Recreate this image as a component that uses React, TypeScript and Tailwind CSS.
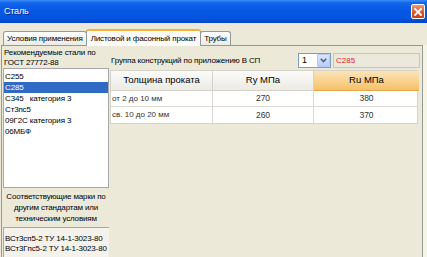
import React from "react";

const font = { fontFamily: '"Liberation Sans", Arial, sans-serif' };

function TitleBar() {
  return (
    <div className="h-[23px] flex items-center justify-between pl-[4px] pr-[2px] bg-[linear-gradient(to_bottom,#3d8ef8_0%,#1466ea_12%,#0657e3_45%,#0454df_80%,#0344c4_100%)]">
      <span className="text-white text-[9px] tracking-[-0.2px] leading-none [text-shadow:1px_1px_0_#0a2a8a]">Сталь</span>
      <div className="w-[14px] h-[15px] rounded-[2px] border border-white bg-[linear-gradient(to_bottom,#ec9a78,#d9532c_60%,#c2411c)] flex items-center justify-center">
        <svg width="8" height="8" viewBox="0 0 8 8">
          <path d="M1 1 L7 7 M7 1 L1 7" stroke="white" strokeWidth="1.8" strokeLinecap="square" />
        </svg>
      </div>
    </div>
  );
}

function Tab({ label, selected }: { label: string; selected?: boolean }) {
  if (selected) {
    return (
      <div className="relative z-10 h-[17px] -mb-[1px] -mx-[1px] px-[4px] flex items-center bg-[#fbfbf8] border border-b-0 border-[#919b9c] rounded-t-[3px] border-t-2 border-t-[#f3b23c] text-[8px] tracking-[-0.15px] text-black leading-none">
        {label}
      </div>
    );
  }
  return (
    <div className="h-[14px] px-[3px] flex items-center bg-[linear-gradient(to_bottom,#ffffff,#ecebe6)] border border-b-0 border-[#919b9c] rounded-t-[3px] text-[8px] tracking-[-0.15px] text-black leading-none">
      {label}
    </div>
  );
}

const steels = ["С255", "С285", "С345   категория 3", "Ст3пс5", "09Г2С категория 3", "06МБФ"];

function LeftColumn() {
  return (
    <div className="w-[107px] flex flex-col pl-[1px] text-[8px] tracking-[-0.15px] whitespace-nowrap">
      <div className="pt-[2px] pl-[1px] leading-[10px] text-black">
        <div>Рекомендуемые стали по</div>
        <div>ГОСТ 27772-88</div>
      </div>
      <div className="h-[120px] bg-white border border-[#a7a6aa] pt-[2px] leading-[11px] text-black">
        {steels.map((s, i) => (
          <div
            key={s}
            className={i === 1 ? "bg-[#316ac5] text-white pl-[1px] whitespace-pre" : "pl-[1px] whitespace-pre"}
          >
            {s}
          </div>
        ))}
      </div>
      <div className="mt-[3px] text-center leading-[11px] text-black">
        <div>Соответствующие марки по</div>
        <div>другим стандартам или</div>
        <div>техническим условиям</div>
      </div>
      <div className="mt-[3px] flex-1 bg-[#f4f2ea] border-t border-l border-[#a7a6aa] pt-[6px] pl-[1px] leading-[10px] text-black">
        <div>ВСт3сп5-2 ТУ 14-1-3023-80</div>
        <div>ВСт3Гпс5-2 ТУ 14-1-3023-80</div>
      </div>
    </div>
  );
}

function RightColumn() {
  return (
    <div className="flex-1 flex flex-col pl-[1px]">
      <div className="mt-[7px] h-[15px] flex items-center">
        <span className="pl-[1px] w-[188px] text-[8px] tracking-[-0.15px] text-black leading-none whitespace-nowrap">Группа конструкций по приложению В СП</span>
        <div className="w-[33px] h-[15px] bg-white border border-[#7f9db9] flex items-center justify-between">
          <span className="pl-[3px] text-[9px] leading-none text-black">1</span>
          <div className="w-[13px] h-[13px] bg-[linear-gradient(to_bottom,#dbe6fd,#b9cdf7)] border border-[#b6c9f3] rounded-[1px] flex items-center justify-center">
            <svg width="7" height="5" viewBox="0 0 7 5">
              <path d="M0.8 0.8 L3.5 3.6 L6.2 0.8" stroke="#4d6185" strokeWidth="1.5" fill="none" />
            </svg>
          </div>
        </div>
        <div className="ml-[2px] w-[87px] h-[15px] bg-[#ebe8dc] border border-[#c9c6b8] flex items-center pl-[2px] text-[8px] leading-none text-[#e8291f]">
          С285
        </div>
      </div>
      <div className="mt-[2px] w-[308px] bg-white border border-[#d5d2ca] text-black">
        <div className="grid grid-cols-[102px_101px_105px] h-[20px] text-[9.5px]">
          <div className="flex items-center justify-center bg-[linear-gradient(to_bottom,#fcfcfb,#ebeae4)] border-r border-b border-[#d5d2ca]">Толщина проката</div>
          <div className="flex items-center justify-center bg-[linear-gradient(to_bottom,#fcfcfb,#ebeae4)] border-r border-b border-[#d5d2ca]">Ry МПа</div>
          <div className="flex items-center justify-center bg-[linear-gradient(to_bottom,#fce4b8,#f6c16a)] border-b border-[#e3a547]">Ru МПа</div>
        </div>
        {[
          ["от 2 до 10 мм", "270", "380"],
          ["св. 10 до 20 мм", "260", "370"],
        ].map((r, i) => (
          <div key={i} className={"grid grid-cols-[102px_101px_105px] h-[16px] text-[8px] text-[#333] " + (i === 0 ? "border-b border-[#dcdad3]" : "")}>
            <div className="flex items-center pl-[1px] border-r border-[#dcdad3]">{r[0]}</div>
            <div className="flex items-center justify-center border-r border-[#dcdad3] text-[8.5px]">{r[1]}</div>
            <div className="flex items-center justify-center text-[8.5px]">{r[2]}</div>
          </div>
        ))}
      </div>
    </div>
  );
}

export default function App() {
  return (
    <div className="w-[427px] h-[257px] overflow-hidden bg-[#ece9d8] flex flex-col" style={font}>
      <TitleBar />
      <div className="flex-1 flex flex-col pt-[6px]">
        <div className="flex items-end pl-[3px] h-[16px]">
          <Tab label="Условия применения" />
          <Tab label="Листовой и фасонный прокат" selected />
          <Tab label="Трубы" />
        </div>
        <div className="flex flex-1">
          <div className="ml-[1px] flex-1 flex border border-[#919b9c] border-b-0 bg-[#ece9d8]">
            <LeftColumn />
            <RightColumn />
          </div>
          <div className="w-[4px] bg-[#f7f4e2]" />
        </div>
      </div>
    </div>
  );
}
